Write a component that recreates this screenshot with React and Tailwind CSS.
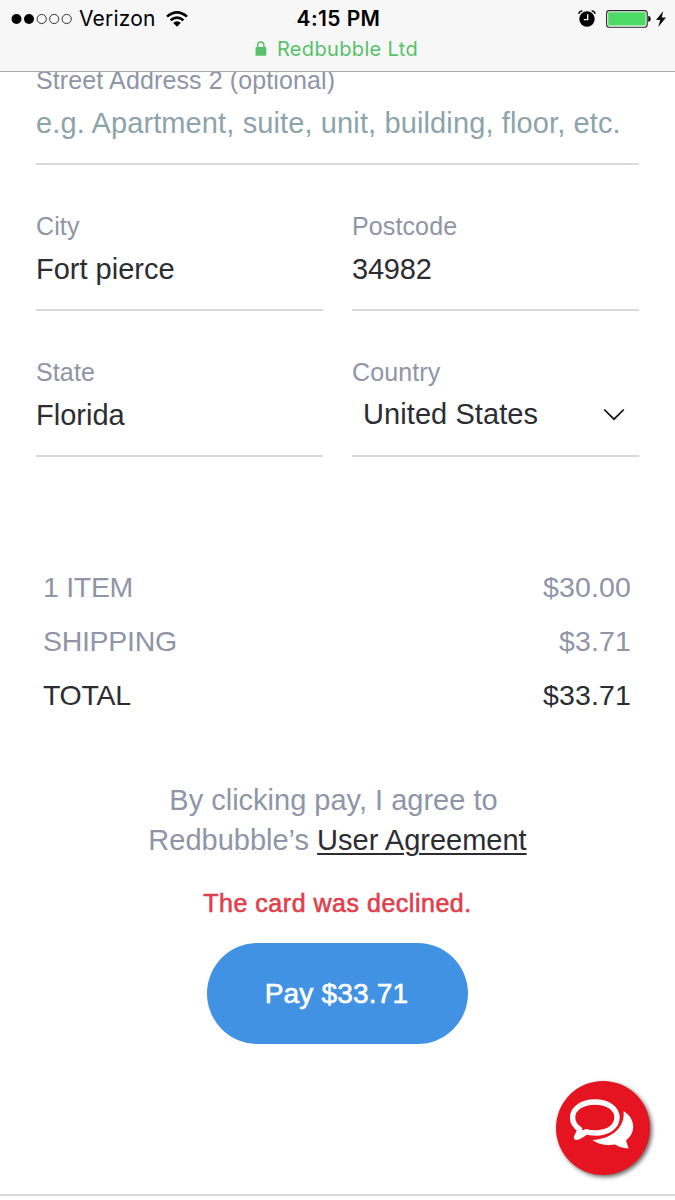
function Signal() {
  return (
    <svg width="62" height="12" viewBox="0 0 62 12" className="shrink-0">
      <circle cx="5.5" cy="6" r="5" fill="#000" />
      <circle cx="18" cy="6" r="5" fill="#000" />
      <circle cx="30.7" cy="6" r="4.6" fill="none" stroke="#222" strokeWidth="0.9" />
      <circle cx="43.2" cy="6" r="4.6" fill="none" stroke="#222" strokeWidth="0.9" />
      <circle cx="55.7" cy="6" r="4.6" fill="none" stroke="#222" strokeWidth="0.9" />
    </svg>
  );
}

function Wifi() {
  return (
    <svg width="22" height="16" viewBox="0 0 22 16" className="shrink-0">
      <g fill="none" stroke="#000" strokeWidth="2.5">
        <path d="M1 5.6 Q11 -2.8 21 5.6" />
        <path d="M4.6 9.3 Q11 4 17.4 9.3" />
      </g>
      <path d="M7.1 11.8 Q11 8.6 14.9 11.8 L11 15.7 Z" fill="#000" />
    </svg>
  );
}

function Alarm() {
  return (
    <svg width="18" height="17" viewBox="0 0 18 17" className="shrink-0">
      <circle cx="9" cy="9" r="7.7" fill="#000" />
      <path d="M0.8 3.8 Q1.3 1 4.4 0.8 M17.2 3.8 Q16.7 1 13.6 0.8" fill="none" stroke="#000" strokeWidth="1.3" />
      <path d="M9.7 4.2 V9.6 H5.8" fill="none" stroke="#f7f7f7" strokeWidth="1.4" />
    </svg>
  );
}

function Battery() {
  return (
    <svg width="46" height="18" viewBox="0 0 46 18" className="shrink-0">
      <rect x="0.6" y="0.6" width="40.6" height="16.6" rx="2.8" fill="#fff" stroke="#222" strokeWidth="1.1" />
      <rect x="2.2" y="2.2" width="37.4" height="13.4" rx="1" fill="#4cd964" />
      <path d="M42.2 5.8 Q44.8 6.2 44.8 8.9 Q44.8 11.6 42.2 12 Z" fill="#111" />
    </svg>
  );
}

function Field({ label, value }) {
  return (
    <div className="flex h-[146px] flex-col border-b-2 border-[#d8d9dc]">
      <label className="mt-[46px] h-[30px] text-[25px] leading-[30px] tracking-[0.12px] text-[#8f95a6]">{label}</label>
      <div className="mt-[11px] h-[34px] text-[29px] leading-[34px] text-[#2c2d32]">{value}</div>
    </div>
  );
}

function Row({ label, value, className }) {
  return (
    <div className={"flex h-[54px] items-center justify-between text-[28.5px] " + className}>
      <span className="tracking-[-0.3px]">{label}</span>
      <span className="pr-px tracking-[0.15px]">{value}</span>
    </div>
  );
}

export default function App() {
  return (
    <div className="relative flex h-[1200px] w-[675px] flex-col overflow-hidden bg-white font-['Liberation_Sans',Arial,sans-serif]">
      <header className="z-10 h-[72px] shrink-0 border-b border-[#aaabad] bg-[#f7f7f7] font-[Inter,sans-serif]">
        <div className="grid h-[37px] grid-cols-[1fr_auto_1fr] items-center pl-[11px] pr-[9px]">
          <div className="flex items-center">
            <Signal />
            <span className="ml-[6px] text-[21px] tracking-[0.2px]">Verizon</span>
            <span className="ml-[10px]"><Wifi /></span>
          </div>
          <span className="text-[21px] font-semibold tracking-[0.4px]">4:15 PM</span>
          <div className="flex items-center justify-end">
            <Alarm />
            <span className="ml-[10px]"><Battery /></span>
            <svg width="10" height="16" viewBox="0 0 10 16" className="ml-[4px]">
              <path d="M7.2 0 L0 9 H4.2 L2.3 16 L10 6.6 H5.8 Z" fill="#111" />
            </svg>
          </div>
        </div>
        <div className="flex h-[24px] items-center justify-center pr-[2px] text-[#56c169]">
          <svg width="12" height="15" viewBox="0 0 12 15" className="-mt-px mr-[10px]">
            <path d="M2.7 7 V4 Q2.7 1 5.8 1 Q8.9 1 8.9 4 V7" fill="none" stroke="currentColor" strokeWidth="1.4" />
            <rect x="0.5" y="6" width="10.8" height="8.7" rx="1" fill="currentColor" />
          </svg>
          <span className="text-[20px] tracking-[0.35px]">Redbubble Ltd</span>
        </div>
      </header>

      <main className="flex flex-col px-9">
        <div className="-mt-[53px]">
          <Field
            label="Street Address 2 (optional)"
            value={<span className="tracking-[0.12px] text-[#8da3ab]">e.g. Apartment, suite, unit, building, floor, etc.</span>}
          />
        </div>
        <div className="grid grid-cols-2 gap-x-[29px]">
          <Field label="City" value="Fort pierce" />
          <Field label="Postcode" value={<span className="tracking-[-0.2px]">34982</span>} />
          <Field label="State" value="Florida" />
          <Field
            label="Country"
            value={
              <div className="-mt-px flex items-center justify-between pl-[11px] pr-[14px]">
                <span className="tracking-[0.08px]">United States</span>
                <svg width="22" height="13" viewBox="0 0 22 13" fill="none" stroke="#111" strokeWidth="1.7">
                  <path d="M1.2 1.5 L11 11.2 L20.8 1.5" />
                </svg>
              </div>
            }
          />
        </div>

        <section className="mt-[103px] px-[7px]">
          <Row label="1 ITEM" value="$30.00" className="text-[#8f95a6]" />
          <Row label="SHIPPING" value="$3.71" className="text-[#8f95a6]" />
          <Row label="TOTAL" value="$33.71" className="text-[#2c2d32]" />
        </section>

        <section className="mt-[58px] flex flex-col items-center">
          <p className="text-center text-[29px] leading-[40px] text-[#8f95a6]">
            By clicking pay, I agree to&nbsp;
            <br />
            Redbubble’s{" "}
            <a className="text-[#2c2d32] underline decoration-[1.5px] underline-offset-[3px]">User Agreement</a>
          </p>
          <p className="mt-[28px] text-[25px] leading-[30px] tracking-[0.52px] text-[#e0404c] [-webkit-text-stroke:0.6px_#e0404c]">
            The card was declined.
          </p>
          <button className="mt-[25px] h-[101px] w-[261px] rounded-full bg-[#4192e3] pr-[2px] text-[28px] tracking-[0.2px] text-white [-webkit-text-stroke:0.6px_white]">
            Pay $33.71
          </button>
        </section>
      </main>

      <button className="absolute left-[556px] top-[1081px] h-[94px] w-[94px] rounded-full bg-[#e51420] shadow-[2px_2px_4px_rgba(0,0,0,0.6)]">
        <svg width="94" height="94" viewBox="0 0 94 94">
          <path d="M67.5 30 C79 37 81 51 70 59.5 C71 61.5 71.5 64.5 72.5 67.5 C67 67.5 62.5 65.8 59 63.6 C50 65 41.5 63 36.5 59 C57 58 69.5 45 67.5 30 Z" fill="#fff" />
          <path d="M39 21 C52 21 61 27.5 61 36.6 C61 45.8 52 52 39 52 C35.5 52 32.5 51.6 30 50.8 C26.5 54 22.5 55.9 20.5 56.3 C22.2 53.5 23.3 50.5 23.7 48.3 C18.8 45.3 16.6 41 16.6 36.6 C16.6 27.5 26 21 39 21 Z" fill="#e51420" stroke="#fff" strokeWidth="5.4" strokeLinejoin="round" />
          <path d="M20.5 56.2 C22.2 53.5 23.3 50.5 23.7 48.3 L30.5 50.5 C26.5 54 22.5 55.7 20.5 56.2 Z" fill="#fff" />
        </svg>
      </button>

      <div className="absolute left-0 top-[1194px] h-[2px] w-full bg-[#d9d9db]" />
    </div>
  );
}
